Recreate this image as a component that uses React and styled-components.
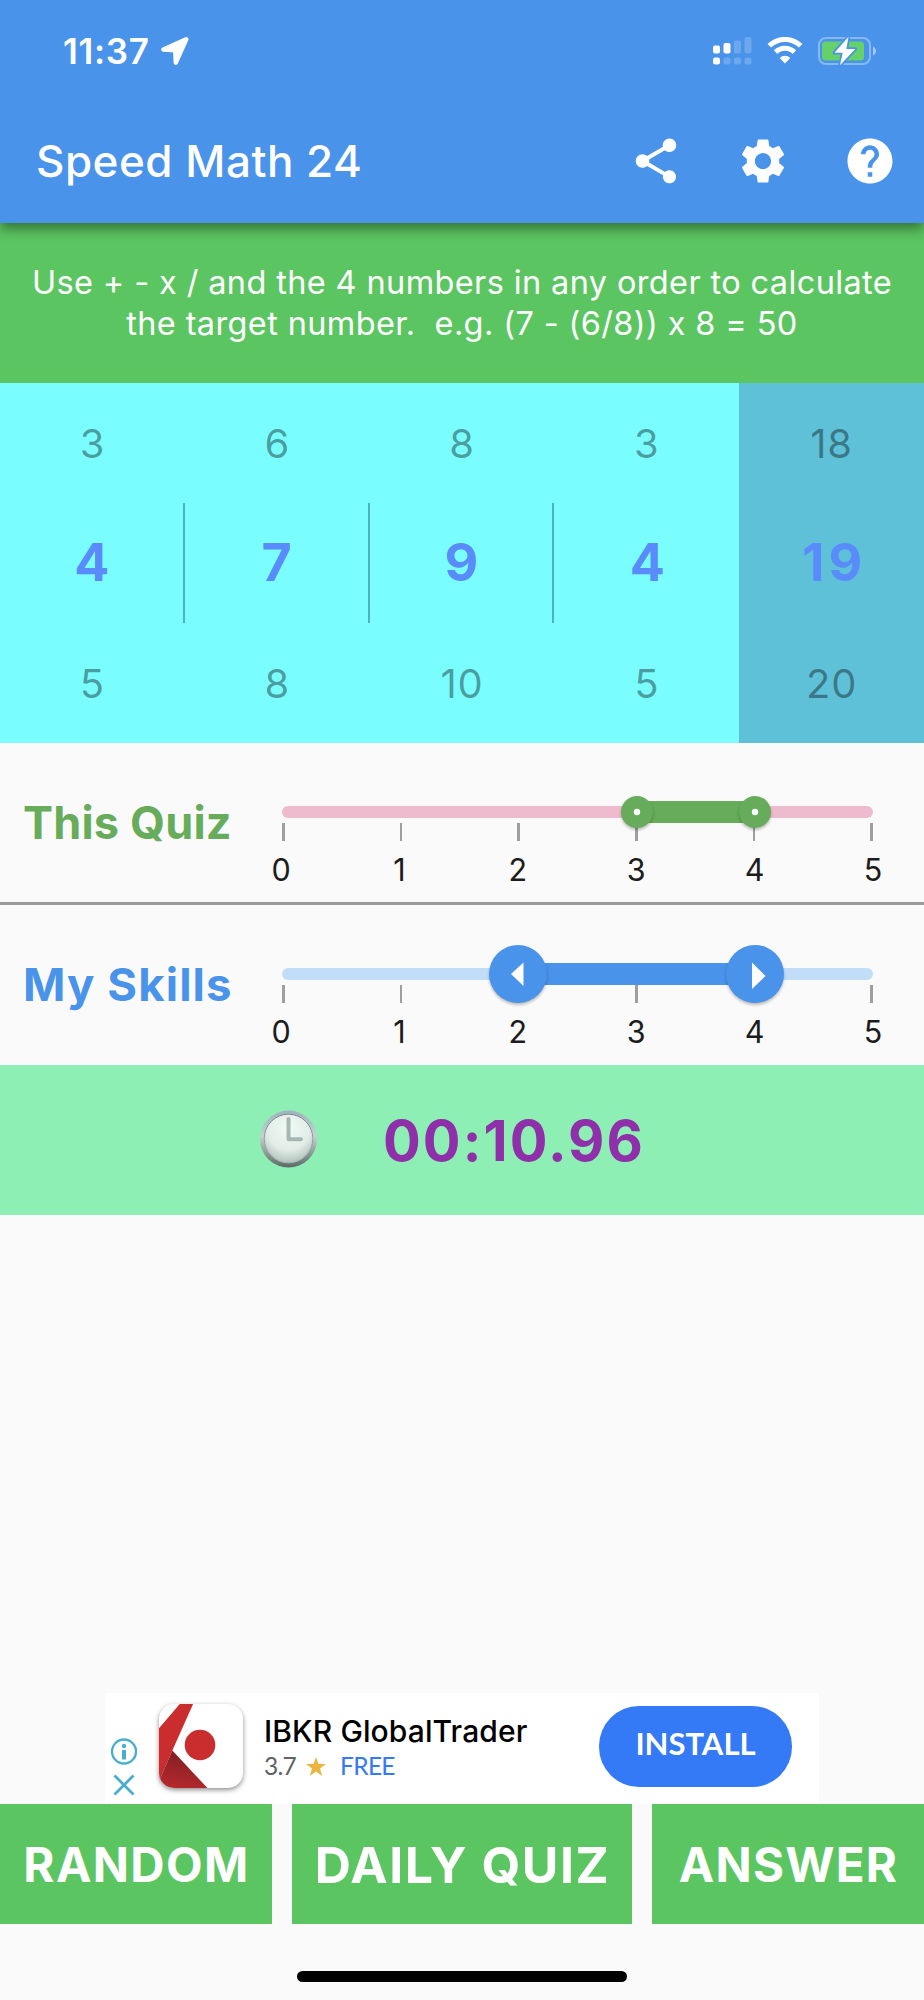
import React from 'react';
import styled, { createGlobalStyle } from 'styled-components';
import { MdShare, MdSettings, MdHelp } from 'react-icons/md';

const GlobalStyle = createGlobalStyle`
  * {
    box-sizing: border-box;
  }

  body {
    margin: 0;
    background: #fafafa;
    font-family: 'Inter', 'Liberation Sans', sans-serif;
  }
`;

const Screen = styled.div`
  width: 924px;
  height: 2000px;
  display: flex;
  flex-direction: column;
  overflow: hidden;
  background: #fafafa;
`;

const Header = styled.header`
  flex: none;
  height: 223px;
  color: #fff;
  background: #4993ea;
  box-shadow: 0 6px 12px rgba(0, 0, 0, 0.42);
  z-index: 1;
`;

const StatusBar = styled.div`
  height: 99px;
  padding: 2px 48px 0 63px;
  display: flex;
  align-items: center;

  svg {
    display: block;
  }
`;

const Time = styled.span`
  width: 98px;
  font-size: 35px;
  font-weight: 600;
  line-height: 40px;
  letter-spacing: 0.7px;
`;

const StatusIcons = styled.div`
  margin-left: auto;
  display: flex;
  align-items: center;
  gap: 15px;
`;

const Toolbar = styled.div`
  height: 124px;
  padding: 0 27px 0 36px;
  display: flex;
  align-items: center;

  h1 {
    margin: 0;
    font-size: 44px;
    font-weight: 500;
    line-height: 56px;
    letter-spacing: 0.5px;
  }
`;

const Actions = styled.div`
  margin-left: auto;
  display: flex;
  gap: 53px;

  svg {
    display: block;
    width: 54px;
    height: 54px;
  }
`;

const Banner = styled.p`
  flex: none;
  height: 160px;
  margin: 0;
  padding: 40.4px 0 0;
  font-size: 32.5px;
  line-height: 40.5px;
  letter-spacing: 0.37px;
  text-align: center;
  white-space: pre;
  color: #fff;
  background: #5bc661;
`;

const Wheels = styled.div`
  flex: none;
  height: 360px;
  display: grid;
  grid-template-columns: repeat(5, 1fr);
`;

const Wheel = styled.div`
  display: grid;
  grid-template-rows: repeat(3, 120px);
  background: ${({ $target }) => ($target ? '#5fc1d8' : '#79fdff')};
`;

const WheelItem = styled.div`
  display: flex;
  align-items: center;
  justify-content: center;
  font-size: 40px;
  letter-spacing: 0.8px;
  color: rgba(0, 0, 0, 0.38);
`;

const WheelCurrent = styled(WheelItem)`
  padding: 0 0 1px 5px;
  font-size: 52px;
  font-weight: 700;
  letter-spacing: 4px;
  color: #5a8bfb;
  border-right: ${({ $divider }) => ($divider ? '2px solid #4fb0c2' : 'none')};
`;

const RangeRow = styled.section`
  flex: none;
  height: ${({ $height }) => $height}px;
  padding-left: 23px;
  display: flex;
  border-bottom: ${({ $divider }) => ($divider ? '3px solid #9b9b9b' : 'none')};
`;

const RangeLabel = styled.h2`
  width: 243px;
  margin: 52px 0 0;
  font-size: ${({ $size }) => $size}px;
  font-weight: 700;
  line-height: 56px;
  letter-spacing: ${({ $spacing }) => $spacing}px;
  white-space: nowrap;
  color: ${({ $color }) => $color};
`;

const Scale = styled.div`
  width: 622px;
  padding-top: 63px;
`;

const Track = styled.div`
  position: relative;
  height: 12px;
  margin: 0 15px 0 16px;
  border-radius: 6px;
  background: ${({ $color }) => $color};
`;

const Range = styled.div`
  position: absolute;
  top: -5px;
  height: 22px;
  background: ${({ $color }) => $color};
`;

const Thumb = styled.div`
  position: absolute;
  top: 6px;
  width: ${({ $size }) => $size}px;
  height: ${({ $size }) => $size}px;
  border-radius: 50%;
  transform: translate(-50%, -50%);
  background: ${({ $color }) => $color};
  box-shadow: 0 2px 3px rgba(0, 0, 0, 0.25);

  svg {
    display: block;
    width: 100%;
    height: 100%;
  }
`;

const Ticks = styled.div`
  margin: 5px 15px 0 16px;
  display: flex;
  justify-content: space-between;

  i {
    width: 2.5px;
    height: 18px;
    background: #9f9f9f;
  }
`;

const TickLabels = styled.div`
  margin-top: 9px;
  display: flex;
  justify-content: space-between;
  font-size: 30.5px;
  line-height: 40px;
  color: #1c1c1c;

  span {
    width: 30px;
    text-align: center;
  }
`;

const Timer = styled.section`
  flex: none;
  height: 150px;
  padding-left: 259px;
  display: flex;
  align-items: center;
  background: #8eefb4;

  svg {
    display: block;
    margin-right: 65px;
  }

  strong {
    padding-top: 3px;
    font-size: 56px;
    font-weight: 700;
    line-height: 68px;
    letter-spacing: 2.1px;
    color: #8f2fa9;
  }
`;

const Ad = styled.aside`
  width: 714px;
  height: 111px;
  margin: auto 0 0 105px;
  padding-right: 27px;
  display: flex;
  align-items: flex-start;
  background: #fff;
  font-family: 'Lato', 'Liberation Sans', sans-serif;
`;

const AdChoices = styled.div`
  width: 38px;
  padding: 45px 0 0 6px;

  svg {
    display: block;
  }
`;

const AppIcon = styled.div`
  width: 84px;
  height: 84px;
  margin: 11px 21px 0 16px;
  border-radius: 15px;
  overflow: hidden;
  background: #fff;
  box-shadow: 0 2px 5px rgba(0, 0, 0, 0.45);

  svg {
    display: block;
  }
`;

const AdText = styled.div`
  padding-top: 19px;

  h3 {
    margin: 0;
    font-family: 'Inter', sans-serif;
    font-size: 30px;
    font-weight: 500;
    line-height: 38px;
    letter-spacing: 0.1px;
    color: #000;
  }
`;

const AdMeta = styled.div`
  display: flex;
  align-items: center;
  height: 32px;
  font-size: 24.5px;
  line-height: 32px;
  letter-spacing: -0.7px;
  color: #5f6368;

  svg {
    margin: 1px 14px 0 10px;
  }

  b {
    font-weight: 400;
    color: #3479f6;
  }
`;

const InstallButton = styled.button`
  width: 193px;
  height: 81px;
  margin: 13px 0 0 auto;
  padding: 0 0 7px;
  border: 0;
  border-radius: 40px;
  font-family: 'Lato', 'Liberation Sans', sans-serif;
  font-size: 31px;
  font-weight: 700;
  color: #fff;
  background: #3479f6;
`;

const BottomBar = styled.nav`
  flex: none;
  height: 120px;
  display: grid;
  grid-template-columns: 272px 340px 272px;
  gap: 20px;
`;

const BottomButton = styled.button`
  padding: 2px 0 0 1px;
  border: 0;
  font-family: inherit;
  font-size: ${({ $size }) => $size}px;
  font-weight: 700;
  line-height: 60px;
  letter-spacing: ${({ $spacing }) => $spacing}px;
  white-space: nowrap;
  color: #fff;
  background: #5bc661;
`;

const HomeArea = styled.footer`
  flex: none;
  height: 76px;
  padding-top: 47px;
  display: flex;
  justify-content: center;

  span {
    width: 330px;
    height: 11px;
    border-radius: 6px;
    background: #000;
  }
`;

const LocationArrow = () => (
  <svg width="28" height="28" viewBox="0 0 28 28">
    <path
      d="M25.2 2.3 2.5 12.6l11.8.6.5 12.5z"
      fill="#fff"
      stroke="#fff"
      strokeWidth="4.5"
      strokeLinejoin="round"
    />
  </svg>
);

const SIGNAL = [
  { x: 0, top: 8.5, on: true, second: true },
  { x: 10.5, top: 6, on: true },
  { x: 21, top: 3.5 },
  { x: 31.5, top: 0 },
];

const Signal = () => (
  <svg width="39" height="28" viewBox="0 0 39 28" fill="#fff">
    {SIGNAL.map(({ x, top, on, second }) => (
      <g key={x}>
        <rect x={x} y={top} width="7" height={16.5 - top} rx="2" opacity={on ? 1 : 0.2} />
        <rect x={x} y="20.5" width="7" height="7" rx="2.2" opacity={second ? 1 : 0.2} />
      </g>
    ))}
  </svg>
);

const Wifi = () => (
  <svg width="36" height="28" viewBox="0 0 36 28" fill="none" stroke="#fff" strokeWidth="5">
    <path d="M2.3 8.8a22.4 22.4 0 0 1 31.4 0" />
    <path d="M8.6 15.1a13.4 13.4 0 0 1 18.8 0" />
    <path d="M12.7 20.9a7.4 7.4 0 0 1 10.6 0L18 26.6z" fill="#fff" stroke="none" />
  </svg>
);

const Battery = () => (
  <svg width="58" height="30" viewBox="0 0 58 30">
    <rect x="1" y="2" width="51" height="26" rx="7" fill="none" stroke="#fff" strokeOpacity=".35" strokeWidth="2" />
    <path d="M55 10.5c4 2 4 7 0 9z" fill="#fff" opacity=".5" />
    <rect x="4" y="5.5" width="42" height="19" rx="3.5" fill="#66d168" />
    <path
      d="M30.5.8 16.5 16.8h8.2L22 29.2 37.2 13h-8.8z"
      fill="#fff"
      stroke="#4993ea"
      strokeWidth="3.6"
      strokeLinejoin="round"
      paintOrder="stroke"
    />
  </svg>
);

const Clock = () => (
  <svg width="59" height="59" viewBox="0 0 59 59">
    <defs>
      <linearGradient id="rim" x1="0" y1="0" x2="0" y2="1">
        <stop offset="0" stopColor="#9fb2be" />
        <stop offset=".45" stopColor="#c4d3d0" />
        <stop offset="1" stopColor="#5c6b66" />
      </linearGradient>
      <linearGradient id="inner" x1="0" y1="0" x2="0" y2="1">
        <stop offset="0" stopColor="#77898a" />
        <stop offset="1" stopColor="#a9b9b2" />
      </linearGradient>
      <radialGradient id="face" cx=".5" cy=".3" r=".72">
        <stop offset="0" stopColor="#f1fbf6" />
        <stop offset=".6" stopColor="#e2ede8" />
        <stop offset="1" stopColor="#aebfb7" />
      </radialGradient>
    </defs>
    <circle cx="29.5" cy="29" r="28.5" fill="url(#rim)" />
    <circle cx="29.5" cy="28.5" r="24.3" fill="url(#face)" stroke="url(#inner)" strokeWidth="1" />
    <path d="M29.5 9v20.3H42" fill="none" stroke="#a7b8b4" strokeWidth="4" strokeLinecap="round" strokeLinejoin="round" />
  </svg>
);

const Info = () => (
  <svg width="27" height="60" viewBox="0 0 27 60" fill="none" stroke="#49aecd" strokeWidth="2.4">
    <circle cx="13" cy="13.5" r="12" />
    <circle cx="13" cy="8" r="2.2" fill="#49aecd" stroke="none" />
    <path d="M13 12v9.5" strokeWidth="4" />
    <path d="m3.5 37.5 19 19m0-19-19 19" strokeWidth="2.8" />
  </svg>
);

const TraderLogo = () => (
  <svg width="84" height="84" viewBox="0 0 85 85">
    <defs>
      <linearGradient id="fold" x1=".6" y1="0" x2=".4" y2="1">
        <stop offset="0" stopColor="#7c2024" />
        <stop offset="1" stopColor="#b5282c" />
      </linearGradient>
    </defs>
    <path d="M21 0h13.5l-21 47L0 78V24.5z" fill="#c92d2d" />
    <path d="M13.5 47 49 85H0v-7z" fill="url(#fold)" />
    <circle cx="41.5" cy="41.5" r="15.5" fill="#c92d2d" />
  </svg>
);

const Star = () => (
  <svg width="20" height="20" viewBox="0 0 20 20">
    <path d="m10 0 2.5 7H20l-6 4.500 2.200 7.500-6.200-4.500L3.800 19 6 11.500 0 7h7.500z" fill="#edb440" />
  </svg>
);

const DotMark = () => (
  <svg viewBox="0 0 32 32">
    <circle cx="16" cy="16" r="3.2" fill="#fff" />
  </svg>
);

const LeftMark = () => (
  <svg viewBox="0 0 58 58">
    <path d="M34.5 17.5V41L22 29z" fill="#fff" />
  </svg>
);

const RightMark = () => (
  <svg viewBox="0 0 58 58">
    <path d="M26 17.5V44l13.5-13z" fill="#fff" />
  </svg>
);

const MAX_LEVEL = 5;
const LEVELS = [0, 1, 2, 3, 4, 5];

const WHEELS = [
  { values: [3, 4, 5], divider: true },
  { values: [6, 7, 8], divider: true },
  { values: [8, 9, 10], divider: true },
  { values: [3, 4, 5] },
  { values: [18, 19, 20], target: true },
];

const percent = level => `${(level / MAX_LEVEL) * 100}%`;

const RangeScale = ({ from, to, color, trackColor, thumb, startMark, endMark }) => (
  <Scale>
    <Track $color={trackColor}>
      <Range $color={color} style={{ left: percent(from), width: percent(to - from) }} />
      <Thumb $color={color} $size={thumb} style={{ left: percent(from) }}>
        {startMark}
      </Thumb>
      <Thumb $color={color} $size={thumb} style={{ left: percent(to) }}>
        {endMark}
      </Thumb>
    </Track>
    <Ticks>
      {LEVELS.map(level => (
        <i key={level} />
      ))}
    </Ticks>
    <TickLabels>
      {LEVELS.map(level => (
        <span key={level}>{level}</span>
      ))}
    </TickLabels>
  </Scale>
);

const App = () => (
  <>
    <GlobalStyle />
    <Screen>
      <Header>
        <StatusBar>
          <Time>11:37</Time>
          <LocationArrow />
          <StatusIcons>
            <Signal />
            <Wifi />
            <Battery />
          </StatusIcons>
        </StatusBar>
        <Toolbar>
          <h1>Speed Math 24</h1>
          <Actions>
            <MdShare />
            <MdSettings />
            <MdHelp />
          </Actions>
        </Toolbar>
      </Header>

      <Banner>
        {'Use + - x / and the 4 numbers in any order to calculate\nthe target number.  e.g. (7 - (6/8)) x 8 = 50'}
      </Banner>

      <Wheels>
        {WHEELS.map(({ values: [previous, current, next], divider, target }, i) => (
          <Wheel key={i} $target={target}>
            <WheelItem>{previous}</WheelItem>
            <WheelCurrent $divider={divider}>{current}</WheelCurrent>
            <WheelItem>{next}</WheelItem>
          </Wheel>
        ))}
      </Wheels>

      <RangeRow $height={162.4} $divider>
        <RangeLabel $color="#67ac5b" $size={45} $spacing={0.2}>
          This Quiz
        </RangeLabel>
        <RangeScale
          from={3}
          to={4}
          color="#67ac5b"
          trackColor="#eebbce"
          thumb={32}
          startMark={<DotMark />}
          endMark={<DotMark />}
        />
      </RangeRow>
      <RangeRow $height={159.6}>
        <RangeLabel $color="#4993ea" $size={45.5} $spacing={1.1}>
          My Skills
        </RangeLabel>
        <RangeScale
          from={2}
          to={4}
          color="#4993ea"
          trackColor="#c2ddf8"
          thumb={58}
          startMark={<LeftMark />}
          endMark={<RightMark />}
        />
      </RangeRow>

      <Timer>
        <Clock />
        <strong>00:10.96</strong>
      </Timer>

      <Ad>
        <AdChoices>
          <Info />
        </AdChoices>
        <AppIcon>
          <TraderLogo />
        </AppIcon>
        <AdText>
          <h3>IBKR GlobalTrader</h3>
          <AdMeta>
            3.7
            <Star />
            <b>FREE</b>
          </AdMeta>
        </AdText>
        <InstallButton>INSTALL</InstallButton>
      </Ad>

      <BottomBar>
        <BottomButton $size={47.5} $spacing={1.4}>
          RANDOM
        </BottomButton>
        <BottomButton $size={50} $spacing={1.5}>
          DAILY QUIZ
        </BottomButton>
        <BottomButton $size={47.5} $spacing={1.2}>
          ANSWER
        </BottomButton>
      </BottomBar>

      <HomeArea>
        <span />
      </HomeArea>
    </Screen>
  </>
);

export default App;
